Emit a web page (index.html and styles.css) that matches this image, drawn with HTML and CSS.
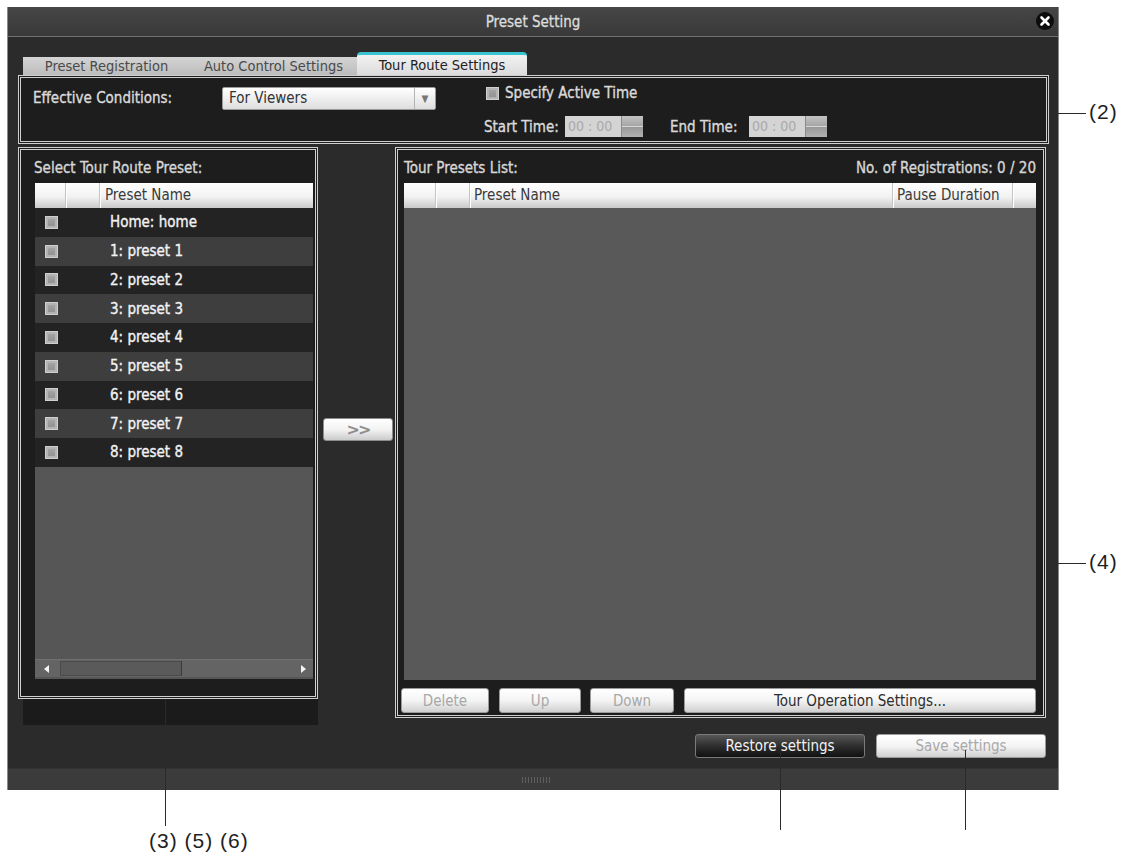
FILE: index.html
```html
<!DOCTYPE html>
<html lang="en">

<head>
    <meta charset="UTF-8">
    <title>Preset Setting</title>
    <link rel="stylesheet" href="styles.css">
</head>

<body>
    <div class="page">
        <div class="window">
            <div class="titlebar">
                <span class="title">Preset Setting</span>
                <span class="close">
                    <svg width="18" height="18" viewBox="0 0 18 18">
                        <circle cx="9" cy="9" r="9" fill="#0d0d0d" />
                        <path d="M5.5 5.5 L12.5 12.5 M12.5 5.5 L5.5 12.5" stroke="#fff" stroke-width="2.6"
                            stroke-linecap="round" />
                    </svg>
                </span>
            </div>

            <div class="window-body">
                <div class="tabs">
                    <div class="tab">Preset Registration</div>
                    <div class="tab">Auto Control Settings</div>
                    <div class="tab active">Tour Route Settings</div>
                </div>

                <div class="tab-panel">
                    <section class="conditions framed">
                        <span class="label cond-label">Effective Conditions:</span>
                        <div class="select">
                            <span class="select-value">For Viewers</span>
                            <span class="select-arrow">▼</span>
                        </div>
                        <div class="active-time">
                            <div class="check-line">
                                <span class="checkbox"></span>
                                <span class="label">Specify Active Time</span>
                            </div>
                            <div class="time-line">
                                <span class="label time-label">Start Time:</span>
                                <span class="time"><span class="time-value">00 : 00</span><span class="spin"></span></span>
                                <span class="label time-label end">End Time:</span>
                                <span class="time"><span class="time-value">00 : 00</span><span class="spin"></span></span>
                            </div>
                        </div>
                    </section>

                    <div class="panels">
                        <div class="left-column">
                            <section class="left-panel framed">
                                <div class="panel-title">Select Tour Route Preset:</div>
                                <div class="grid">
                                    <div class="grid-head">
                                        <span class="cell c-check"></span>
                                        <span class="cell c-icon"></span>
                                        <span class="cell c-name">Preset Name</span>
                                    </div>
                                    <div class="grid-rows">
                                        <div class="row"><span class="c-check"><span class="checkbox"></span></span><span class="c-icon"></span><span class="c-name">Home: home</span></div>
                                        <div class="row"><span class="c-check"><span class="checkbox"></span></span><span class="c-icon"></span><span class="c-name">1: preset 1</span></div>
                                        <div class="row"><span class="c-check"><span class="checkbox"></span></span><span class="c-icon"></span><span class="c-name">2: preset 2</span></div>
                                        <div class="row"><span class="c-check"><span class="checkbox"></span></span><span class="c-icon"></span><span class="c-name">3: preset 3</span></div>
                                        <div class="row"><span class="c-check"><span class="checkbox"></span></span><span class="c-icon"></span><span class="c-name">4: preset 4</span></div>
                                        <div class="row"><span class="c-check"><span class="checkbox"></span></span><span class="c-icon"></span><span class="c-name">5: preset 5</span></div>
                                        <div class="row"><span class="c-check"><span class="checkbox"></span></span><span class="c-icon"></span><span class="c-name">6: preset 6</span></div>
                                        <div class="row"><span class="c-check"><span class="checkbox"></span></span><span class="c-icon"></span><span class="c-name">7: preset 7</span></div>
                                        <div class="row"><span class="c-check"><span class="checkbox"></span></span><span class="c-icon"></span><span class="c-name">8: preset 8</span></div>
                                    </div>
                                    <div class="hscroll">
                                        <span class="arrow-left"></span>
                                        <span class="thumb"></span>
                                        <span class="arrow-right"></span>
                                    </div>
                                </div>
                            </section>
                            <div class="left-foot"></div>
                        </div>

                        <div class="mover">
                            <button class="move-btn">&gt;&gt;</button>
                        </div>

                        <section class="right-panel framed">
                            <div class="panel-title split">
                                <span>Tour Presets List:</span>
                                <span>No. of Registrations: 0 / 20</span>
                            </div>
                            <div class="grid tour-grid">
                                <div class="grid-head">
                                    <span class="cell t-check"></span>
                                    <span class="cell t-icon"></span>
                                    <span class="cell t-name">Preset Name</span>
                                    <span class="cell t-pause">Pause Duration</span>
                                    <span class="cell t-end"></span>
                                </div>
                            </div>
                            <div class="list-buttons">
                                <button class="btn light disabled w-delete">Delete</button>
                                <button class="btn light disabled w-up">Up</button>
                                <button class="btn light disabled w-down">Down</button>
                                <button class="btn light w-tour">Tour Operation Settings...</button>
                            </div>
                        </section>
                    </div>
                </div>

                <div class="actions">
                    <button class="btn dark w-action">Restore settings</button>
                    <button class="btn light disabled w-action">Save settings</button>
                </div>
            </div>

            <div class="statusbar"><span class="grip"></span></div>
        </div>

        <!-- callouts -->
        <span class="callout-line h" style="left:1049px; top:113px; width:37px"></span>
        <span class="callout-text" style="left:1089px; top:100px">(2)</span>
        <span class="callout-line h" style="left:1047px; top:563px; width:39px"></span>
        <span class="callout-text" style="left:1089px; top:550px">(4)</span>
        <span class="callout-line v" style="left:165px; top:699px; height:127px"></span>
        <span class="callout-text" style="left:149px; top:829px">(3) (5) (6)</span>
        <span class="callout-line v" style="left:780px; top:750px; height:80px"></span>
        <span class="callout-line v" style="left:965px; top:750px; height:80px"></span>
    </div>
</body>

</html>
```

FILE: styles.css
```css
* {
    margin: 0;
    padding: 0;
    box-sizing: border-box;
}

body {
    background: #ffffff;
    font-family: 'DejaVu Sans Condensed', 'Liberation Sans Narrow', 'Liberation Sans', sans-serif;
    font-size: 15px;
    color: #d8d8d8;
}

.page {
    position: relative;
    width: 1137px;
    height: 857px;
    padding: 7px 0 0 7px;
}

.window {
    width: 1052px;
    height: 783px;
    background: #2b2b2b;
    border-left: 1px solid #8a8a8a;
    border-right: 1px solid #8a8a8a;
    display: flex;
    flex-direction: column;
}

/* title bar */
.titlebar {
    height: 30px;
    flex: none;
    background: linear-gradient(#464646, #393939);
    border-bottom: 1px solid #707070;
    display: flex;
    align-items: center;
    justify-content: center;
    position: relative;
}

.title {
    color: #dcdcdc;
    font-size: 15px;
    -webkit-text-stroke: 0.3px #dcdcdc;
}

.close {
    position: absolute;
    right: 4px;
    top: 5px;
    width: 18px;
    height: 18px;
}

.window-body {
    flex: 1;
    padding: 15px 9px 10px 10px;
    display: flex;
    flex-direction: column;
}

/* tabs */
.tabs {
    display: flex;
    align-items: flex-end;
    height: 23px;
    padding-left: 5px;
}

.tab {
    height: 18px;
    line-height: 19px;
    background: linear-gradient(#d4d4d4, #bcbcbc);
    color: #4a4a4a;
    font-size: 14.5px;
    text-align: center;
    overflow: hidden;
}

.tab:nth-child(1) {
    width: 167px;
}

.tab:nth-child(2) {
    width: 167px;
}

.tab.active {
    width: 170px;
    height: 23px;
    line-height: 21px;
    background: linear-gradient(#f2f2f2, #dcdcdc);
    border-top: 3px solid #3cc3d2;
    border-radius: 4px 4px 0 0;
    color: #222;
}

.framed {
    border: 3px double #cfcfcf;
    background: #1d1d1d;
}

/* effective conditions */
.conditions {
    height: 69px;
    display: flex;
    align-items: flex-start;
    padding: 9px 12px 0;
}

.label {
    color: #dadada;
    white-space: nowrap;
    -webkit-text-stroke: 0.35px #dadada;
}

.cond-label {
    width: 189px;
    line-height: 23px;
    flex: none;
}

.select {
    width: 214px;
    height: 23px;
    flex: none;
    display: flex;
    background: linear-gradient(#ffffff, #dedede);
    border: 1px solid #9a9a9a;
    border-radius: 2px;
}

.select-value {
    flex: 1;
    color: #333;
    line-height: 21px;
    padding-left: 6px;
}

.select-arrow {
    width: 21px;
    border-left: 1px solid #b5b5b5;
    color: #777;
    font-size: 10px;
    text-align: center;
    line-height: 21px;
}

.active-time {
    margin-left: 48px;
    margin-top: -4px;
}

.check-line {
    display: flex;
    align-items: center;
    height: 20px;
    padding-left: 2px;
    gap: 6px;
}

.checkbox {
    display: inline-block;
    width: 13px;
    height: 13px;
    background: linear-gradient(#a8a8a8, #8e8e8e);
    border: 1px solid #cfcfcf;
    box-shadow: inset 0 0 0 2px #b4b4b4;
}

.time-line {
    display: flex;
    align-items: center;
    height: 21px;
    margin-top: 13px;
}

.time-label {
    width: 81px;
}

.time-label.end {
    width: 79px;
    margin-left: 27px;
}

.time {
    display: flex;
    height: 21px;
}

.time-value {
    width: 56px;
    background: #d4d4d4;
    color: #a9a9a9;
    font-size: 14px;
    line-height: 21px;
    padding-left: 3px;
}

.spin {
    width: 22px;
    background: linear-gradient(#c4c4c4, #a6a6a6 46%, #d6d6d6 50%, #9a9a9a 54%, #b2b2b2);
    border-left: 1px solid #8a8a8a;
}

/* panels */
.panels {
    display: flex;
    align-items: flex-start;
    margin-top: 3px;
    height: 578px;
}

.left-column {
    width: 300px;
    flex: none;
}

.left-panel {
    height: 552px;
    display: flex;
    flex-direction: column;
    padding: 8px 2px 17px 14px;
}

.left-foot {
    height: 26px;
    margin-left: 5px;
    background: #1b1b1b;
}

.panel-title {
    height: 20px;
    line-height: 20px;
    margin-bottom: 5px;
    margin-left: -1px;
    color: #d6d6d6;
    white-space: nowrap;
    -webkit-text-stroke: 0.35px #d6d6d6;
}

.panel-title.split {
    display: flex;
    justify-content: space-between;
    margin-left: 3px;
}

.grid {
    flex: 1;
    background: #565656;
    display: flex;
    flex-direction: column;
}

.grid-head {
    height: 25px;
    flex: none;
    display: flex;
    background: linear-gradient(#ffffff, #f2f2f2 55%, #c9c9c9);
}

.grid-head .cell {
    color: #3a3a3a;
    line-height: 25px;
    border-right: 1px solid #c4c4c4;
    box-shadow: 1px 0 0 #ffffff;
}

.c-check {
    width: 31px;
    flex: none;
}

.c-icon {
    width: 34px;
    flex: none;
}

.c-name {
    flex: 1;
    padding-left: 5px;
}

.grid-head .c-name {
    border-right: none;
    box-shadow: none;
}

.grid-rows {
    flex: 1;
}

.row {
    height: 28.75px;
    display: flex;
    align-items: center;
    background: #232323;
}

.row:nth-child(even) {
    background: #3e3e3e;
}

.row .c-check {
    display: flex;
    justify-content: center;
    padding-left: 2px;
}

.row .c-name {
    color: #f2f2f2;
    padding-left: 10px;
    -webkit-text-stroke: 0.35px #f2f2f2;
}

.hscroll {
    height: 18px;
    margin: 0 0 2px;
    background: #646464;
    border-top: 1px solid #707070;
    display: flex;
    align-items: center;
}

.arrow-left,
.arrow-right {
    width: 0;
    height: 0;
    border-top: 4px solid transparent;
    border-bottom: 4px solid transparent;
}

.arrow-left {
    margin-left: 9px;
    border-right: 5px solid #f4f4f4;
}

.arrow-right {
    margin-left: auto;
    margin-right: 7px;
    border-left: 5px solid #f4f4f4;
}

.thumb {
    width: 122px;
    height: 15px;
    margin-left: 11px;
    background: #5a5a5a;
    border: 1px solid #4a4a4a;
    border-right-color: #3a3a3a;
}

.mover {
    width: 77px;
    flex: none;
    padding: 271px 0 0 5px;
}

.move-btn {
    width: 70px;
    height: 23px;
    border: 1px solid #8c8c8c;
    border-radius: 3px;
    background: linear-gradient(#ffffff, #f3f3f3 50%, #cbcbcb);
    color: #8e8e8e;
    font-family: 'DejaVu Sans', sans-serif;
    font-weight: bold;
    font-size: 16px;
    line-height: 20px;
    letter-spacing: -2px;
}

.right-panel {
    width: 651px;
    height: 571px;
    flex: none;
    display: flex;
    flex-direction: column;
    padding: 8px 7px 2px 3px;
}

.tour-grid {
    margin-left: 3px;
    margin-bottom: 8px;
    background: #595959;
}

.t-check {
    width: 32px;
}

.t-icon {
    width: 34px;
}

.t-name {
    width: 423px;
    padding-left: 4px;
}

.t-pause {
    width: 120px;
    padding-left: 4px;
}

.t-end {
    flex: 1;
}

.grid-head .t-end {
    border-right: none;
    box-shadow: none;
}

/* buttons */
.btn {
    font-family: inherit;
    font-size: 15px;
    height: 25px;
    border-radius: 3px;
    cursor: pointer;
    white-space: nowrap;
}

.btn.light {
    background: linear-gradient(#ffffff, #f4f4f4 50%, #d0d0d0);
    border: 1px solid #9a9a9a;
    color: #2c2c2c;
}

.btn.disabled {
    color: #a8a8a8;
}

.btn.dark {
    background: linear-gradient(#575757, #2e2e2e 50%, #111111);
    border: 1px solid #7a7a7a;
    color: #f2f2f2;
}

.list-buttons {
    display: flex;
    height: 25px;
}

.w-delete {
    width: 88px;
}

.w-up {
    width: 82px;
    margin-left: 10px;
}

.w-down {
    width: 84px;
    margin-left: 9px;
}

.w-tour {
    width: 352px;
    margin-left: 10px;
}

.actions {
    display: flex;
    justify-content: flex-end;
    gap: 11px;
    margin-top: 9px;
    padding-right: 3px;
}

.w-action {
    width: 170px;
    height: 24px;
}

.statusbar {
    height: 22px;
    flex: none;
    background: #3b3b3b;
    border-top: 1px solid #333;
    display: flex;
    justify-content: center;
    align-items: center;
}

.grip {
    width: 30px;
    height: 6px;
    margin-left: 8px;
    background: repeating-linear-gradient(90deg, #5e5e5e 0 1px, transparent 1px 3px);
}

/* callouts */
.callout-line {
    position: absolute;
    background: #2a2a2a;
}

.callout-line.h {
    height: 1px;
}

.callout-line.v {
    width: 1px;
}

.callout-text {
    position: absolute;
    font-family: 'Liberation Sans', Arial, sans-serif;
    font-size: 21px;
    color: #1e1e1e;
    white-space: nowrap;
    letter-spacing: 1px;
}
```
